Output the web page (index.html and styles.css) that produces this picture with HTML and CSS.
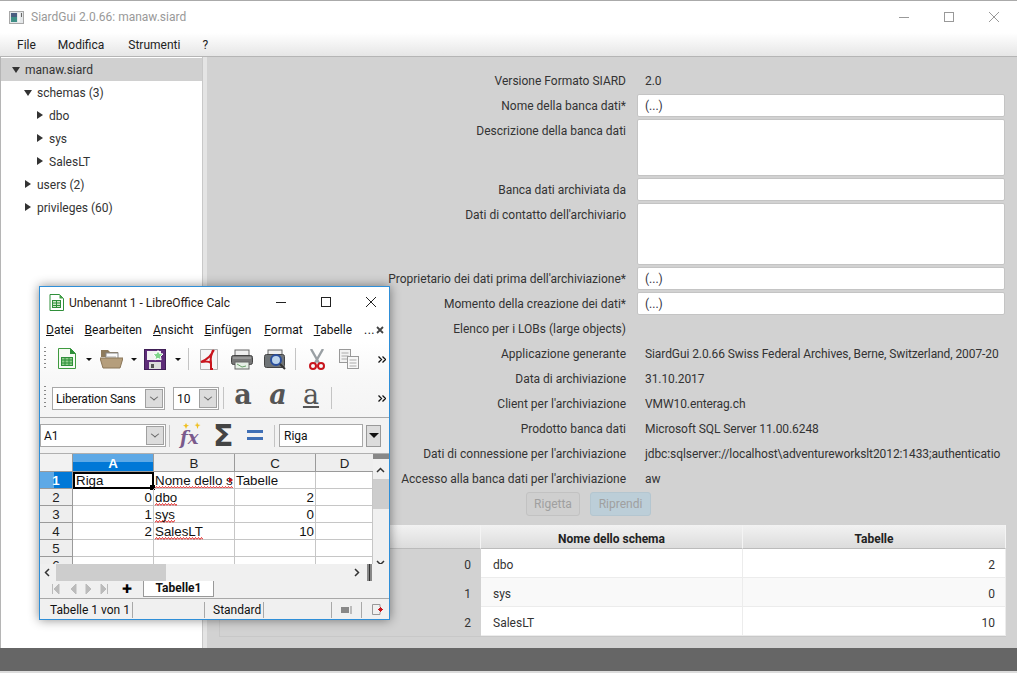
FILE: index.html
```html
<!DOCTYPE html>
<html lang="it">

<head>
    <meta charset="UTF-8">
    <title>SiardGui 2.0.66: manaw.siard</title>
    <link rel="stylesheet" href="styles.css">
</head>

<body>
    <div class="app">
        <div class="titlebar">
            <svg class="app-icon" width="15" height="13" viewBox="0 0 15 13">
                <rect x="0.5" y="0.5" width="14" height="12" fill="#e4e7e9" stroke="#a8a8a8" />
                <rect x="2" y="2" width="6" height="9" fill="#3f8f86" />
                <rect x="2" y="2" width="6" height="4" fill="#4a5d80" />
                <rect x="9" y="2" width="2" height="9" fill="#f4f4f4" />
                <rect x="12" y="2" width="1" height="4" fill="#666" />
            </svg>
            <span class="app-title">SiardGui 2.0.66: manaw.siard</span>
            <div class="winctl">
                <svg width="12" height="12" viewBox="0 0 12 12"><path d="M1 6.5h10" stroke="#999" /></svg>
                <svg width="12" height="12" viewBox="0 0 12 12"><rect x="1.5" y="1.5" width="9" height="9" fill="none" stroke="#999" /></svg>
                <svg width="12" height="12" viewBox="0 0 12 12"><path d="M1 1l10 10M11 1L1 11" stroke="#999" /></svg>
            </div>
        </div>
        <div class="menubar">
            <span>File</span>
            <span>Modifica</span>
            <span>Strumenti</span>
            <span>?</span>
        </div>

        <div class="content">
            <div class="tree">
                <div class="node selected"><i class="arrow down"></i>manaw.siard</div>
                <div class="node lvl1"><i class="arrow down"></i>schemas (3)</div>
                <div class="node lvl2"><i class="arrow"></i>dbo</div>
                <div class="node lvl2"><i class="arrow"></i>sys</div>
                <div class="node lvl2"><i class="arrow"></i>SalesLT</div>
                <div class="node lvl1"><i class="arrow"></i>users (2)</div>
                <div class="node lvl1"><i class="arrow"></i>privileges (60)</div>
            </div>
            <div class="divider"></div>
            <div class="details">
                <div class="form">
                    <label>Versione Formato SIARD</label>
                    <div class="val">2.0</div>
                    <label>Nome della banca dati*</label>
                    <div class="field">(...)</div>
                    <label>Descrizione della banca dati</label>
                    <div class="field area-a"></div>
                    <label>Banca dati archiviata da</label>
                    <div class="field"></div>
                    <label>Dati di contatto dell'archiviario</label>
                    <div class="field area-b"></div>
                    <label>Proprietario dei dati prima dell'archiviazione*</label>
                    <div class="field">(...)</div>
                    <label>Momento della creazione dei dati*</label>
                    <div class="field">(...)</div>
                    <label>Elenco per i LOBs (large objects)</label>
                    <div class="val"></div>
                    <label>Applicazione generante</label>
                    <div class="val">SiardGui 2.0.66 Swiss Federal Archives, Berne, Switzerland, 2007-20</div>
                    <label>Data di archiviazione</label>
                    <div class="val">31.10.2017</div>
                    <label>Client per l'archiviazione</label>
                    <div class="val">VMW10.enterag.ch</div>
                    <label>Prodotto banca dati</label>
                    <div class="val">Microsoft SQL Server 11.00.6248</div>
                    <label>Dati di connessione per l'archiviazione</label>
                    <div class="val">jdbc:sqlserver://localhost\adventureworkslt2012:1433;authenticatio</div>
                    <label>Accesso alla banca dati per l'archiviazione</label>
                    <div class="val">aw</div>
                </div>
                <div class="actions">
                    <button>Rigetta</button>
                    <button class="default">Riprendi</button>
                </div>
                <div class="grid">
                    <div class="th"></div>
                    <div class="th">Nome dello schema</div>
                    <div class="th">Tabelle</div>
                    <div class="idx">0</div>
                    <div class="td">dbo</div>
                    <div class="td num">2</div>
                    <div class="idx">1</div>
                    <div class="td odd">sys</div>
                    <div class="td odd num">0</div>
                    <div class="idx">2</div>
                    <div class="td">SalesLT</div>
                    <div class="td num">10</div>
                </div>
            </div>
        </div>
        <div class="statusbar"></div>
        <div class="sliver"></div>
    </div>

    <div class="calc">
        <div class="calc-title">
            <svg width="15" height="17" viewBox="0 0 15 17">
                <path d="M1 .5h9.5l4 4v12H1z" fill="#fff" stroke="#2f8f3a" />
                <path d="M10.5.5l4 4h-4z" fill="#43a047" />
                <rect x="3.5" y="6.5" width="8" height="7" fill="#cfe8c8" stroke="#2f8f3a" />
                <path d="M3.5 9h8M3.5 11.5h8M7.5 6.5v7" stroke="#2f8f3a" />
            </svg>
            <span class="calc-name">Unbenannt 1 - LibreOffice Calc</span>
            <div class="calc-ctl">
                <svg width="12" height="12" viewBox="0 0 12 12"><path d="M1 6.5h10" stroke="#222" /></svg>
                <svg width="12" height="12" viewBox="0 0 12 12"><rect x="1.5" y="1.5" width="9" height="9" fill="none" stroke="#222" /></svg>
                <svg width="12" height="12" viewBox="0 0 12 12"><path d="M1 1l10 10M11 1L1 11" stroke="#222" /></svg>
            </div>
        </div>
        <div class="calc-menu">
            <span><u>D</u>atei</span>
            <span><u>B</u>earbeiten</span>
            <span><u>A</u>nsicht</span>
            <span class="wide"><u>E</u>infügen</span>
            <span><u>F</u>ormat</span>
            <span><u>T</u>abelle</span>
            <span class="more">...<svg width="8" height="8" viewBox="0 0 8 8"><path d="M1 1l6 6M7 1L1 7" stroke="#444" stroke-width="1.800" /></svg></span>
        </div>

        <div class="bar bar1">
            <i class="grip"></i>
            <svg class="ic-new" width="18" height="22" viewBox="0 0 18 22">
                <path d="M.5.5h12l5 5v15H.5z" fill="#f6fbf4" stroke="#3f9a3f" />
                <path d="M12 0l6 6h-6z" fill="#2f8f3a" />
                <rect x="3.5" y="9.5" width="11" height="8" fill="#8fd08a" stroke="#2f8f3a" />
                <path d="M3.5 12h11M3.5 15h11M7 9.5v8M11 9.5v8" stroke="#2f8f3a" />
            </svg>
            <i class="drop drop-a"></i>
            <svg class="ic-open" width="23" height="20" viewBox="0 0 23 20">
                <path d="M1 4V1h7l2 2h8v5H1z" fill="#8d7a5c" />
                <rect x="6" y="4" width="12" height="8" fill="#fafafa" stroke="#888" />
                <path d="M7 8h9M7 10h9" stroke="#aaa" />
                <path d="M0 9h23l-3 10H3z" fill="#b59e7c" stroke="#8a7658" />
            </svg>
            <i class="drop drop-b"></i>
            <svg class="ic-save" width="22" height="21" viewBox="0 0 22 21">
                <rect x=".5" y=".5" width="21" height="20" fill="#5e2d79" stroke="#3f1f55" />
                <rect x="3" y="2" width="14" height="9" fill="#f2f2f2" />
                <rect x="5" y="13" width="12" height="7" fill="#dcdcdc" />
                <rect x="7" y="15" width="3" height="4" fill="#555" />
                <path d="M14 1.500l1.500 3 3.500.5-2.500 2.500.6 3.500-3.100-1.700-3.100 1.700.6-3.500L9 5l3.500-.5z" fill="#7fd68a" stroke="#fff" />
            </svg>
            <i class="drop drop-c"></i>
            <i class="tsep sep-a"></i>
            <svg class="ic-pdf" width="18" height="21" viewBox="0 0 18 21">
                <path d="M.5.5h17v20H.5z" fill="#f5f5f5" stroke="#b0b0b0" />
                <path d="M13 1C12 7 8 10 1 13c5-1 8-1 10 1v6h2M11 14C10 9 11 5 14 1" fill="none" stroke="#c8141c" stroke-width="2" />
            </svg>
            <svg class="ic-print" width="22" height="21" viewBox="0 0 22 21">
                <rect x="4" y="1" width="14" height="6" fill="#eee" stroke="#666" />
                <rect x=".5" y="6.5" width="21" height="9" rx="2" fill="#777" stroke="#444" />
                <rect x="4" y="13" width="14" height="7" fill="#e6efe6" stroke="#666" />
                <path d="M6 15l5 3 4-1" fill="none" stroke="#6aa06a" />
                <path d="M2 9h18" stroke="#bbb" />
            </svg>
            <svg class="ic-preview" width="22" height="21" viewBox="0 0 22 21">
                <rect x="4" y="1" width="14" height="5" fill="#eee" stroke="#666" />
                <rect x=".5" y="5.500" width="20" height="13" rx="2" fill="#6f7477" stroke="#444" />
                <circle cx="12" cy="11" r="5" fill="#bcd4ec" stroke="#2a4f9e" stroke-width="2" />
                <path d="M16 15l5 5" stroke="#333" stroke-width="2" />
            </svg>
            <i class="tsep sep-b"></i>
            <svg class="ic-cut" width="18" height="21" viewBox="0 0 18 21">
                <path d="M3 0l8 14M15 0L7 14" stroke="#9aa0a4" stroke-width="2.400" />
                <circle cx="5" cy="17" r="3" fill="none" stroke="#c8141c" stroke-width="2" />
                <circle cx="13" cy="17" r="3" fill="none" stroke="#c8141c" stroke-width="2" />
            </svg>
            <svg class="ic-copy" width="20" height="20" viewBox="0 0 20 20">
                <rect x=".5" y=".5" width="11" height="13" fill="#f2f2f2" stroke="#999" />
                <path d="M2.500 4h7M2.500 7h7M2.500 10h7" stroke="#aaa" />
                <rect x="8.500" y="7.500" width="11" height="12" fill="#f8f8f8" stroke="#999" />
                <path d="M10.500 11h7M10.500 14h7M10.500 17h7" stroke="#aaa" />
            </svg>
            <svg class="chev" width="8" height="7" viewBox="0 0 8 7"><path d="M.5.5l3 3-3 3M4.500.5l3 3-3 3" fill="none" stroke="#111" stroke-width="1.300" /></svg>
        </div>

        <div class="bar bar2">
            <i class="grip"></i>
            <div class="combo font-box"><span>Liberation Sans</span><i class="cbtn"></i></div>
            <div class="combo size-box"><span>10</span><i class="cbtn"></i></div>
            <i class="tsep sep-c"></i>
            <span class="fmt fmt-b">a</span>
            <span class="fmt fmt-i">a</span>
            <span class="fmt fmt-u">a</span>
            <i class="tsep sep-d"></i>
            <svg class="chev" width="8" height="7" viewBox="0 0 8 7"><path d="M.5.5l3 3-3 3M4.500.5l3 3-3 3" fill="none" stroke="#111" stroke-width="1.300" /></svg>
        </div>

        <div class="bar formula">
            <div class="combo name-box"><span>A1</span><i class="cbtn"></i></div>
            <i class="tsep sep-e"></i>
            <span class="fx">fx<svg class="stars" width="21" height="9" viewBox="0 0 21 9"><path d="M5 1l1 2 2 .5-2 1L5 7 4 4.500l-2-1 2-.5zM16 0l1 2.500 2.500.5-2 1-1 3-1-3-2-1 2-.5z" fill="#f0c020" /></svg></span>
            <span class="sigma">Σ</span>
            <svg class="equals" width="16" height="12" viewBox="0 0 16 12"><path d="M0 1.500h16M0 8.500h16" stroke="#3f6fb5" stroke-width="3" /></svg>
            <i class="tsep sep-f"></i>
            <div class="input-box">Riga</div>
            <div class="expand"><i></i></div>
        </div>

        <div class="sheet">
            <div class="corner"></div>
            <div class="ch active">A</div>
            <div class="ch">B</div>
            <div class="ch">C</div>
            <div class="ch">D</div>
            <div class="vscroll">
                <i class="split"></i>
                <svg width="15" height="12" viewBox="0 0 15 12"><path d="M4 8l3.500-3.500L11 8" fill="none" stroke="#333" stroke-width="1.500" /></svg>
                <div class="vthumb"></div>
                <svg class="vdown" width="15" height="12" viewBox="0 0 15 12"><path d="M4 4l3.500 3.500L11 4" fill="none" stroke="#333" stroke-width="1.500" /></svg>
            </div>

            <div class="rh active">1</div>
            <div class="c cursor">Riga</div>
            <div class="c clip"><span class="wavy">Nome dello s</span><i class="overflow"></i></div>
            <div class="c">Tabelle</div>
            <div class="c"></div>

            <div class="rh">2</div>
            <div class="c r">0</div>
            <div class="c"><span class="wavy">dbo</span></div>
            <div class="c r">2</div>
            <div class="c"></div>

            <div class="rh">3</div>
            <div class="c r">1</div>
            <div class="c"><span class="wavy">sys</span></div>
            <div class="c r">0</div>
            <div class="c"></div>

            <div class="rh">4</div>
            <div class="c r">2</div>
            <div class="c"><span class="wavy">SalesLT</span></div>
            <div class="c r">10</div>
            <div class="c"></div>

            <div class="rh">5</div>
            <div class="c"></div>
            <div class="c"></div>
            <div class="c"></div>
            <div class="c"></div>

            <div class="rh">6</div>
            <div class="c"></div>
            <div class="c"></div>
            <div class="c"></div>
            <div class="c"></div>
        </div>

        <div class="hscroll">
            <svg width="15" height="15" viewBox="0 0 15 15"><path d="M9 4L5.500 7.500 9 11" fill="none" stroke="#333" stroke-width="1.500" /></svg>
            <div class="hthumb"></div>
            <svg class="hright" width="15" height="15" viewBox="0 0 15 15"><path d="M6 4l3.500 3.500L6 11" fill="none" stroke="#333" stroke-width="1.500" /></svg>
            <i class="hsplit"></i>
        </div>

        <div class="tabs">
            <svg class="tab-nav" width="56" height="10" viewBox="0 0 56 10">
                <path d="M.5 0v10M7 0L2 5l5 5zM24 0l-5 5 5 5zM34 0l5 5-5 5zM49 0l5 5-5 5zM55.500 0v10" fill="#bbb" stroke="#bbb" />
            </svg>
            <span class="tab-add">✚</span>
            <div class="tab">Tabelle1</div>
        </div>

        <div class="calc-status">
            <span class="st st1">Tabelle 1 von 1</span>
            <span class="st st2"></span>
            <span class="st st3">Standard</span>
            <span class="st st4"></span>
            <span class="st st5"><svg width="12" height="8" viewBox="0 0 12 8"><path d="M0 1h8v6H0z" fill="#888" /><path d="M10 0v8" stroke="#888" /></svg></span>
            <span class="st6"><svg width="12" height="11" viewBox="0 0 12 11"><path d="M8 3V.5H.5v10H8V8" fill="none" stroke="#999" /><path d="M6 5.500h5M8.500 3v5M7 4l3 3M10 4L7 7" stroke="#c8141c" /></svg></span>
        </div>
    </div>
</body>

</html>
```

FILE: styles.css
```css
body {
    margin: 0;
    font-family: Roboto, sans-serif;
    font-size: 12px;
    color: #333;
    overflow: hidden;
}

.app {
    height: 673px;
    display: flex;
    flex-direction: column;
    border-top: 1px solid #aaa;
    box-sizing: border-box;
}

/* main window chrome */
.titlebar {
    height: 32px;
    flex: none;
    display: flex;
    align-items: center;
    padding-left: 9px;
    background: #fff;
}

.app-title {
    margin-left: 7px;
    color: #999;
}

.winctl {
    margin-left: auto;
    margin-right: 17px;
    display: flex;
    gap: 33px;
}

.menubar {
    height: 24px;
    flex: none;
    box-sizing: border-box;
    display: flex;
    align-items: center;
    padding: 1px 0 0 17px;
    gap: 22px;
    background: linear-gradient(#fff, #e6e6e6);
    border-bottom: 1px solid #b5b5b5;
    color: #222;
}

.menubar span:nth-child(3) {
    margin-left: 2px;
}

.content {
    flex: 1;
    display: flex;
    min-height: 0;
    background: #d2d2d2;
}

/* tree */
.tree {
    width: 202px;
    flex: none;
    padding-top: 1px;
    background: #fff;
    border-left: 1px solid #b5b5b5;
    box-sizing: border-box;
}

.node {
    height: 23px;
    line-height: 25px;
    padding-left: 24px;
    position: relative;
    white-space: nowrap;
}

.node.selected {
    background: #d0d0d0;
}

.node.lvl1 {
    padding-left: 36px;
}

.node.lvl2 {
    padding-left: 48px;
}

.arrow {
    position: absolute;
    margin-left: -12px;
    top: 7px;
    width: 0;
    height: 0;
    border-left: 6px solid #333;
    border-top: 4px solid transparent;
    border-bottom: 4px solid transparent;
}

.arrow.down {
    margin-left: -13px;
    top: 9px;
    border-top: 6px solid #333;
    border-left: 4px solid transparent;
    border-right: 4px solid transparent;
    border-bottom: 0;
}

.divider {
    width: 5px;
    flex: none;
    background: #e4e4e4;
    border-left: 1px solid #c8c8c8;
    box-sizing: border-box;
}

/* detail form */
.details {
    flex: 1;
    min-width: 0;
    padding: 11px 12px 0 12px;
}

.form {
    display: grid;
    grid-template-columns: 407px 368px;
    column-gap: 11px;
}

.form label {
    height: 25px;
    line-height: 27px;
    text-align: right;
    white-space: nowrap;
}

.val {
    height: 25px;
    line-height: 27px;
    padding-left: 8px;
    overflow: hidden;
    white-space: nowrap;
    width: 358px;
    letter-spacing: -0.09px;
}

.field {
    height: 23px;
    line-height: 23px;
    margin: 1px 0;
    padding-left: 7px;
    box-sizing: border-box;
    background: #fff;
    border: 1px solid #c4c4c4;
    border-radius: 2px;
    color: #334;
}

.area-a {
    height: 57px;
}

.area-b {
    height: 62px;
}

.actions {
    display: flex;
    gap: 10px;
    margin-top: 1px;
    padding-left: 307px;
}

.actions button {
    height: 24px;
    width: 54px;
    padding: 0;
    font: inherit;
    color: #a0a0a0;
    background: #cfcfcf;
    border: 1px solid #c2c2c2;
    border-radius: 3px;
}

.actions button.default {
    width: 61px;
    background: #bcced8;
    border-color: #b4c6d0;
}

.grid {
    margin-top: 9px;
    display: grid;
    grid-template-columns: 261px 262px 263px;
    grid-template-rows: 24px 29px 29px 29px;
    border: 1px solid #c8c8c8;
    border-top: 0;
    border-right: 0;
    width: 786px;
    box-sizing: content-box;
}

.th {
    display: flex;
    align-items: center;
    justify-content: center;
    padding-top: 4px;
    box-sizing: border-box;
    font-weight: 700;
    background: linear-gradient(#f2f2f2, #dcdcdc);
    border-right: 1px solid #f4f4f4;
    border-bottom: 1px solid #bbb;
    color: #222;
}

.idx {
    line-height: 32px;
    height: 29px;
    text-align: right;
    padding-right: 10px;
}

.td {
    line-height: 32px;
    height: 29px;
    box-sizing: border-box;
    padding: 0 10px 0 12px;
    background: #fff;
    border-right: 1px solid #ececec;
    border-bottom: 1px solid #ececec;
}

.td.odd {
    background: #f9f9f9;
}

.td.num {
    text-align: right;
}

.statusbar {
    height: 23px;
    flex: none;
    background: #666;
}

.sliver {
    height: 2px;
    flex: none;
    background: #dcdcdc;
}

/* LibreOffice window, floats over the main one */
.calc {
    position: absolute;
    left: 39px;
    top: 286px;
    width: 351px;
    height: 334px;
    box-sizing: border-box;
    display: flex;
    flex-direction: column;
    background: #f2f2f2;
    border: 1px solid #2f8fd8;
    box-shadow: 0 0 10px rgba(0, 0, 0, 0.45);
    color: #111;
}

.calc-title {
    height: 30px;
    flex: none;
    display: flex;
    align-items: center;
    padding-left: 9px;
    background: #fff;
}

.calc-name {
    margin: 2px 0 0 5px;
    color: #2b1a12;
}

.calc-ctl {
    margin-left: auto;
    margin-right: 12px;
    display: flex;
    gap: 33px;
}

.calc-menu {
    height: 25px;
    flex: none;
    display: flex;
    align-items: center;
    padding-left: 6px;
    background: #fff;
}

.calc-menu span {
    margin-right: 11px;
}

.calc-menu span.wide {
    margin-right: 13px;
}

.calc-menu span.more {
    margin: 0 0 0 1px;
    letter-spacing: 0.5px;
}

.more svg {
    margin-left: 1px;
}

.bar {
    flex: none;
    display: flex;
    align-items: center;
}

.bar1 {
    height: 34px;
    background: linear-gradient(#fff, #f8f8f8);
}

.bar2 {
    height: 42px;
    padding-top: 3px;
    background: linear-gradient(#f8f8f8, #f4f4f4);
    border-bottom: 1px solid #a8a8a8;
    box-sizing: border-box;
}

.formula {
    height: 36px;
    background: #f2f2f2;
    border-bottom: 1px solid #b0b0b0;
    box-sizing: border-box;
}

.grip {
    width: 2px;
    height: 24px;
    margin-left: 4px;
    flex: none;
    background: repeating-linear-gradient(#888 0 1px, transparent 1px 4px);
}

.tsep {
    width: 1px;
    height: 22px;
    flex: none;
    background: #c4c4c4;
}

.drop {
    width: 0;
    height: 0;
    flex: none;
    border-top: 3px solid #111;
    border-left: 3px solid transparent;
    border-right: 3px solid transparent;
}

.ic-new {
    margin-left: 12px;
}

.drop-a {
    margin-left: 10px;
}

.ic-open {
    margin-left: 8px;
}

.drop-b {
    margin-left: 8px;
}

.ic-save {
    margin-left: 7px;
}

.drop-c {
    margin-left: 9px;
}

.sep-a {
    margin-left: 7px;
}

.ic-pdf {
    margin-left: 11px;
}

.ic-print {
    margin-left: 13px;
}

.ic-preview {
    margin-left: 11px;
}

.sep-b {
    margin-left: 9px;
}

.ic-cut {
    margin-left: 12px;
}

.ic-copy {
    margin-left: 13px;
}

.chev {
    margin-left: auto;
    margin-right: 3px;
}

.combo {
    height: 23px;
    flex: none;
    box-sizing: border-box;
    display: flex;
    align-items: center;
    justify-content: space-between;
    padding: 2px 1px 2px 3px;
    background: #fff;
    border: 1px solid #a8a8a8;
}

.combo span {
    padding-top: 1px;
}

.cbtn {
    width: 16px;
    height: 17px;
    flex: none;
    background: #dcdcdc;
    border: 1px solid #a0a0a0;
    position: relative;
}

.cbtn::after {
    content: "";
    position: absolute;
    left: 5px;
    top: 4px;
    width: 5px;
    height: 5px;
    border-right: 1px solid #666;
    border-bottom: 1px solid #666;
    transform: scaleY(0.8) rotate(45deg);
}

.font-box {
    width: 113px;
    margin-left: 6px;
    letter-spacing: -0.2px;
}

.size-box {
    width: 46px;
    margin-left: 8px;
}

.sep-c {
    margin-left: 4px;
}

.fmt {
    font-family: "DejaVu Serif", serif;
    font-size: 27px;
    font-weight: 700;
    line-height: 24px;
    color: #555;
    width: 18px;
    text-align: center;
    margin-top: -6px;
}

.fmt-b {
    margin-left: 10px;
}

.fmt-i {
    margin-left: 17px;
    font-style: italic;
}

.fmt-u {
    margin-left: 15px;
    text-decoration: underline;
    font-weight: 400;
}

.sep-d {
    margin-left: 11px;
}

.name-box {
    width: 126px;
}

.sep-e {
    margin-left: 3px;
}

.fx {
    position: relative;
    margin-left: 10px;
    width: 21px;
    font-family: "DejaVu Serif", serif;
    font-style: italic;
    font-weight: 700;
    font-size: 18px;
    line-height: 24px;
    padding-top: 4px;
    color: #7a5a8c;
}

.stars {
    position: absolute;
    left: 1px;
    top: 0;
}

.sigma {
    margin-left: 12px;
    width: 19px;
    font-family: "DejaVu Sans", sans-serif;
    font-size: 30px;
    font-weight: 700;
    line-height: 24px;
    color: #444;
}

.equals {
    margin-left: 15px;
}

.sep-f {
    margin-left: 11px;
}

.input-box {
    width: 84px;
    height: 23px;
    margin-left: 4px;
    line-height: 22px;
    padding-left: 4px;
    box-sizing: border-box;
    background: #fff;
    border: 1px solid #a8a8a8;
}

.expand {
    width: 15px;
    height: 22px;
    margin-left: 3px;
    box-sizing: border-box;
    background: #dcdcdc;
    border: 1px solid #999;
    display: flex;
    align-items: center;
    justify-content: center;
}

.expand i {
    border-top: 5px solid #111;
    border-left: 5px solid transparent;
    border-right: 5px solid transparent;
}

/* spreadsheet */
.sheet {
    height: 110px;
    flex: none;
    overflow: hidden;
    display: grid;
    grid-template-columns: 33px 81px 81px 81px 57px 16px;
    grid-template-rows: 18px repeat(6, 17px);
    background: #fff;
    font-family: "Liberation Sans", sans-serif;
    font-size: 13.33px;
}

.corner,
.ch,
.rh {
    background: #eeeeee;
    border-right: 1px solid #9a9a9a;
    border-bottom: 1px solid #9a9a9a;
    box-sizing: border-box;
    color: #222;
}

.corner {
    background: #f2f2f2;
}

.ch {
    text-align: center;
    line-height: 19px;
}

.ch:nth-child(5) {
    border-right: 0;
}

.rh {
    text-align: center;
    line-height: 17px;
}

.ch.active,
.rh.active {
    background: #0078d7;
    color: #fff;
    font-weight: 700;
}

.ch.active {
    background: linear-gradient(#5ea9e6 50%, #0078d7 50%);
}

.rh.active {
    background: linear-gradient(90deg, #5ea9e6 45%, #0078d7 45%);
}

.c {
    border-right: 1px solid #c6c6c6;
    border-bottom: 1px solid #c6c6c6;
    box-sizing: border-box;
    line-height: 15px;
    padding: 1px 1px 0;
    white-space: nowrap;
    position: relative;
}

.c.clip {
    overflow: hidden;
}

.c.r {
    text-align: right;
}

.c.cursor {
    border: 2px solid #000;
    line-height: 14px;
    padding: 0 0 0 1px;
}

.c.cursor::after {
    content: "";
    position: absolute;
    right: -3px;
    bottom: -3px;
    width: 5px;
    height: 5px;
    background: #000;
}

/* spell check squiggle, drawn under the word */
.wavy {
    padding-bottom: 1px;
    background: url("data:image/svg+xml,%3Csvg xmlns='http://www.w3.org/2000/svg' width='6' height='3'%3E%3Cpath d='M0 2.500l1.500-2 1.500 2 1.500-2 1.500 2' fill='none' stroke='%23e02020'/%3E%3C/svg%3E") repeat-x left bottom;
}

.overflow {
    position: absolute;
    right: 1px;
    top: 5px;
    border-left: 4px solid #c8141c;
    border-top: 3px solid transparent;
    border-bottom: 3px solid transparent;
}

.vscroll {
    grid-column: 6;
    grid-row: 1 / 8;
    display: flex;
    flex-direction: column;
    background: #f0f0f0;
}

.split {
    height: 5px;
    flex: none;
    background: #888;
    margin-bottom: 5px;
}

.vthumb {
    height: 30px;
    margin-top: 3px;
    background: #cdcdcd;
}

.vdown {
    margin-top: auto;
    margin-bottom: 5px;
}

.hscroll {
    height: 17px;
    flex: none;
    display: flex;
    align-items: center;
    background: #f0f0f0;
}

.hthumb {
    width: 110px;
    height: 17px;
    background: #cdcdcd;
    margin-left: 1px;
}

.hright {
    margin-left: auto;
    margin-right: 3px;
}

.hsplit {
    width: 5px;
    height: 17px;
    margin-right: 17px;
    background: linear-gradient(90deg, #888 0 2px, #333 2px 3px, #888 3px);
}

.tabs {
    height: 17px;
    flex: none;
    display: flex;
    align-items: flex-start;
    background: #f0f0f0;
}

.tab-nav {
    margin: 3px 0 0 12px;
}

.tab-add {
    margin-left: 14px;
    font-size: 12px;
    line-height: 17px;
    color: #000;
    width: 12px;
}

.tab {
    width: 71px;
    height: 16px;
    margin-left: 9px;
    line-height: 14px;
    box-sizing: border-box;
    text-align: center;
    font-weight: 700;
    background: #fff;
    border: 1px solid #999;
    border-top: 0;
}

.calc-status {
    flex: 1;
    display: flex;
    align-items: center;
    padding-top: 1px;
    border-top: 1px solid #a8a8a8;
    background: #f0f0f0;
}

.st {
    height: 16px;
    line-height: 16px;
    box-sizing: border-box;
    border-right: 1px solid #a8a8a8;
    white-space: nowrap;
}

.st1 {
    width: 93px;
    padding-left: 10px;
}

.st2 {
    width: 72px;
}

.st3 {
    width: 59px;
    padding-left: 8px;
}

.st4 {
    width: 68px;
}

.st5 {
    width: 30px;
    padding-left: 9px;
}

.st6 {
    margin-left: 10px;
    line-height: 0;
}
```
